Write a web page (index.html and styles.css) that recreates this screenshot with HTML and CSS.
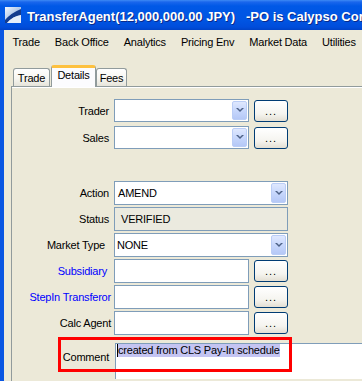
FILE: index.html
```html
<!DOCTYPE html>
<html lang="en">
<head>
<meta charset="utf-8">
<title>TransferAgent</title>
<link rel="stylesheet" href="styles.css">
</head>
<body>
<div class="window">
  <div class="titlebar">
    <svg class="app-icon" viewBox="0 0 16 16" width="16" height="16">
      <defs>
        <linearGradient id="iconbg" x1="0" y1="0" x2="1" y2="1">
          <stop offset="0" stop-color="#f4f8fd"/>
          <stop offset="1" stop-color="#6f9ad8"/>
        </linearGradient>
      </defs>
      <rect width="16" height="16" fill="url(#iconbg)"/>
      <path d="M0 13 Q6 6 16 2 L16 8 Q8 9 2 16 L0 16 Z" fill="#143c8e"/>
      <path d="M2 16 Q8 9 16 8 L16 16 Z" fill="#e6eefa"/>
    </svg>
    <span class="title">TransferAgent(12,000,000.00 JPY)&nbsp;&nbsp; -PO is Calypso Corp</span>
  </div>
  <div class="frame">
    <nav class="menubar">
      <span class="menu-item">Trade</span>
      <span class="menu-item">Back Office</span>
      <span class="menu-item">Analytics</span>
      <span class="menu-item">Pricing Env</span>
      <span class="menu-item">Market Data</span>
      <span class="menu-item">Utilities</span>
    </nav>
    <div class="tabs">
      <div class="tabstrip">
        <div class="tab tab-trade">Trade</div>
        <div class="tab tab-details is-active">Details</div>
        <div class="tab tab-fees">Fees</div>
      </div>
      <div class="panel">
        <div class="row row-compact">
          <span class="label">Trader</span>
          <div class="field combo"><span class="combo-value"></span><span class="combo-btn"><svg viewBox="0 0 8 5" width="8" height="5"><polygon points="0,0 2,0 4,2 6,0 8,0 4,4" fill="#4d6185"/></svg></span></div>
          <div class="dots-btn">...</div>
        </div>
        <div class="row row-compact section-break">
          <span class="label">Sales</span>
          <div class="field combo"><span class="combo-value"></span><span class="combo-btn"><svg viewBox="0 0 8 5" width="8" height="5"><polygon points="0,0 2,0 4,2 6,0 8,0 4,4" fill="#4d6185"/></svg></span></div>
          <div class="dots-btn">...</div>
        </div>
        <div class="row">
          <span class="label">Action</span>
          <div class="field combo span-2"><span class="combo-value">AMEND</span><span class="combo-btn"><svg viewBox="0 0 8 5" width="8" height="5"><polygon points="0,0 2,0 4,2 6,0 8,0 4,4" fill="#4d6185"/></svg></span></div>
        </div>
        <div class="row">
          <span class="label">Status</span>
          <div class="field readonly span-2">VERIFIED</div>
        </div>
        <div class="row">
          <span class="label label-in4">Market Type</span>
          <div class="field combo span-2"><span class="combo-value combo-value-tight">NONE</span><span class="combo-btn"><svg viewBox="0 0 8 5" width="8" height="5"><polygon points="0,0 2,0 4,2 6,0 8,0 4,4" fill="#4d6185"/></svg></span></div>
        </div>
        <div class="row">
          <span class="label label-link label-in2">Subsidiary</span>
          <div class="field"></div>
          <div class="dots-btn">...</div>
        </div>
        <div class="row">
          <span class="label label-link label-out2">StepIn Transferor</span>
          <div class="field"></div>
          <div class="dots-btn">...</div>
        </div>
        <div class="row">
          <span class="label label-out2">Calc Agent</span>
          <div class="field"></div>
          <div class="dots-btn">...</div>
        </div>
        <div class="comment-row">
          <span class="label comment-label">Comment</span>
          <div class="textarea"><span class="selection">created from CLS Pay-In schedule</span></div>
          <div class="annotation"></div>
        </div>
      </div>
    </div>
  </div>
</div>
</body>
</html>
```

FILE: styles.css
```css
html, body {
  margin: 0;
  padding: 0;
}

body {
  width: 362px;
  height: 381px;
  overflow: hidden;
  background: #ece9d8;
  font-family: "Liberation Sans", Arial, sans-serif;
  font-size: 11px;
  letter-spacing: -0.2px;
  color: #000;
}

.window {
  width: 362px;
  height: 381px;
  overflow: hidden;
}

/* Title bar */
.titlebar {
  box-sizing: border-box;
  height: 30px;
  padding: 3px 0 0 5px;
  display: flex;
  align-items: flex-start;
  white-space: nowrap;
  overflow: hidden;
  color: #fff;
  background: linear-gradient(180deg, #3d8af5 0px, #1a66ec 2px, #0058e6 6px, #0055e3 20px, #004ddb 27px, #0043c8 30px);
}

.app-icon {
  flex: none;
  margin-top: 4px;
  margin-right: 6px;
}

.title {
  font-weight: bold;
  font-size: 13px;
  line-height: 27px;
  letter-spacing: 0;
  text-shadow: 1px 1px 0 #0a2a8a;
}

/* Frame */
.frame {
  height: 351px;
  border-left: 4px solid #0a56e2;
  background: #ece9d8;
}

.menubar {
  display: flex;
  height: 24px;
  line-height: 24px;
  padding-left: 1px;
  white-space: nowrap;
}

.menu-item {
  padding: 0 7.5px;
}

/* Tabs */
.tabs {
  margin: 11px 0 0 7px;
}

.tabstrip {
  display: flex;
  align-items: flex-end;
  height: 21px;
  padding-left: 2px;
  position: relative;
  z-index: 1;
}

.tab {
  box-sizing: border-box;
  height: 18px;
  padding-top: 2px;
  line-height: 14px;
  text-align: center;
  border: 1px solid #919b9c;
  border-bottom: none;
  border-radius: 3px 3px 0 0;
  background: linear-gradient(180deg, #ffffff 0%, #f7f6f1 55%, #e6e4da 100%);
}

.tab-trade {
  width: 37px;
  margin-right: 1px;
}

.tab-details {
  width: 45px;
}

.tab-fees {
  width: 31px;
}

.tab.is-active {
  height: 22px;
  margin-bottom: -1px;
  padding-top: 0;
  border-top: 3px solid #fdc13f;
  background: #fcfcfe;
}

.panel {
  height: 282px;
  padding-top: 12px;
  border-top: 1px solid #919b9c;
  border-left: 1px solid #919b9c;
  box-shadow: inset 0 1px 0 #ffffff;
}

/* Form rows */
.row {
  display: grid;
  grid-template-columns: 97px 135px 34px;
  column-gap: 5px;
  align-items: center;
  height: 24px;
  margin-bottom: 2px;
}

.row-compact {
  height: 23px;
  margin-bottom: 4px;
}

.row-compact.section-break {
  margin-bottom: 32px;
}

.label {
  text-align: right;
  white-space: nowrap;
}

.label-link {
  color: #0000ff;
}

.label-in4 {
  padding-right: 4px;
}

.label-in2 {
  padding-right: 2px;
}

.label-out2 {
  margin-right: -2px;
}

.span-2 {
  grid-column: 2 / 4;
}

.field {
  box-sizing: border-box;
  height: 100%;
  border: 1px solid #7f9db9;
  background: #fff;
}

.combo {
  display: flex;
  padding: 1px;
}

.combo-value {
  flex: 1;
  padding-left: 2px;
  line-height: 20px;
  white-space: nowrap;
}

.combo-value-tight {
  padding-left: 1px;
}

.combo-btn {
  flex: none;
  box-sizing: border-box;
  width: 15px;
  display: flex;
  align-items: center;
  justify-content: center;
  border: 1px solid #bacdf6;
  border-radius: 2px;
  background: linear-gradient(180deg, #dfe8fe 0%, #c7d7fc 50%, #b5c8f6 100%);
}

.combo-btn svg {
  display: block;
}

.readonly {
  padding-left: 6px;
  line-height: 22px;
  background: #ebeadf;
}

.dots-btn {
  box-sizing: border-box;
  height: 22px;
  line-height: 20px;
  text-align: center;
  letter-spacing: 1px;
  border: 1px solid #003c74;
  border-radius: 3px;
  background: linear-gradient(180deg, #ffffff 0%, #f5f4ef 65%, #e3dfd3 100%);
}

/* Comment */
.comment-row {
  position: relative;
  display: grid;
  grid-template-columns: 97px 1fr;
  column-gap: 6px;
  margin-top: 8px;
}

.comment-label {
  padding-top: 7px;
  line-height: 14px;
}

.textarea {
  height: 35px;
  padding-left: 1px;
  border-top: 1px solid #7f9db9;
  border-left: 1px solid #7f9db9;
  background: #fff;
  white-space: nowrap;
  overflow: hidden;
}

.selection {
  display: inline-block;
  height: 13px;
  line-height: 13px;
  padding-left: 1px;
  background: #c4c4f2;
  box-shadow: inset 1px 0 0 #000;
}

.annotation {
  position: absolute;
  left: 46px;
  top: -6px;
  width: 234px;
  height: 35px;
  box-sizing: border-box;
  border: 3px solid #ff0000;
  pointer-events: none;
}
```
